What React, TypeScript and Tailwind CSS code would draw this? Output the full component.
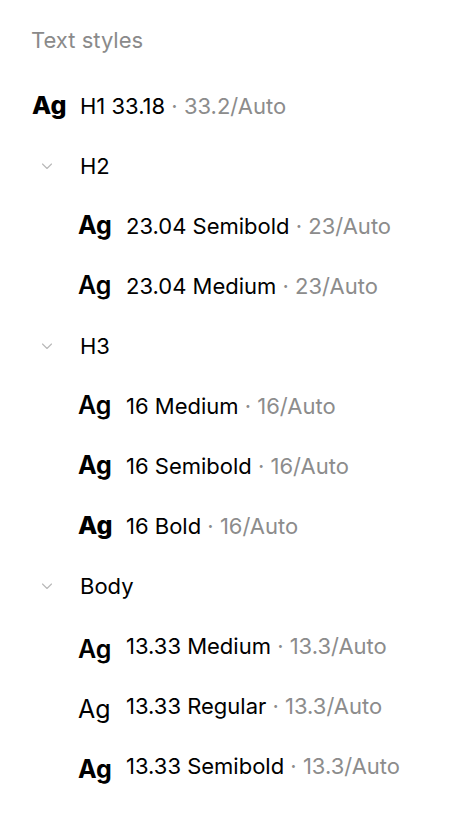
import React from 'react';

type Style = { ag: string; name: string; meta: string };

const groups: { title: string; items: Style[] }[] = [
  {
    title: 'H2',
    items: [
      { ag: 'text-[25px] font-bold -translate-y-[1px]', name: '23.04 Semibold', meta: '23/Auto' },
      { ag: 'text-[25px] font-semibold -translate-y-[1px]', name: '23.04 Medium', meta: '23/Auto' },
    ],
  },
  {
    title: 'H3',
    items: [
      { ag: 'text-[25px] font-semibold -translate-y-[1px]', name: '16 Medium', meta: '16/Auto' },
      { ag: 'text-[25px] font-bold -translate-y-[1px]', name: '16 Semibold', meta: '16/Auto' },
      { ag: 'text-[25px] font-extrabold -translate-y-[1px]', name: '16 Bold', meta: '16/Auto' },
    ],
  },
  {
    title: 'Body',
    items: [
      { ag: 'text-[25px] font-semibold translate-y-[3px]', name: '13.33 Medium', meta: '13.3/Auto' },
      { ag: 'text-[25px] font-normal translate-y-[3px]', name: '13.33 Regular', meta: '13.3/Auto' },
      { ag: 'text-[25px] font-bold translate-y-[3px]', name: '13.33 Semibold', meta: '13.3/Auto' },
    ],
  },
];

function Chevron() {
  return (
    <svg width="12" height="12" viewBox="0 0 12 12" fill="none" className="text-[#b8b8b8]">
      <path d="M1.5 4 L6 8.5 L10.5 4" stroke="currentColor" strokeWidth="1.1" strokeLinecap="round" strokeLinejoin="round" />
    </svg>
  );
}

function Label({ name, meta }: { name: string; meta: string }) {
  return (
    <span className="text-[22px] text-black">
      {name}
      <span className="text-[#8c8c8c]"> · {meta}</span>
    </span>
  );
}

export default function App() {
  return (
    <div className="w-[464px] h-[832px] bg-white" style={{ fontFamily: 'Inter, "Noto Sans", sans-serif' }}>
      <div className="pl-8 pt-[26px]">
        <div className="text-[22px] text-[#8a8a8a] h-[28px] leading-[28px] -ml-px">Text styles</div>
        <div className="flex items-center h-[60px] mt-[22px]">
          <span className="w-12 text-[25px] font-extrabold text-black leading-none -translate-y-[1px]">Ag</span>
          <Label name="H1 33.18" meta="33.2/Auto" />
        </div>
        {groups.map((g) => (
          <div key={g.title}>
            <div className="flex items-center h-[60px]">
              <span className="w-12 pl-[9px] flex items-center">
                <Chevron />
              </span>
              <span className="text-[22px] text-black">{g.title}</span>
            </div>
            {g.items.map((it) => (
              <div key={it.name} className="flex items-center h-[60px] pl-[46px]">
                <span className={`w-12 leading-none text-black ${it.ag}`}>Ag</span>
                <Label name={it.name} meta={it.meta} />
              </div>
            ))}
          </div>
        ))}
      </div>
    </div>
  );
}
